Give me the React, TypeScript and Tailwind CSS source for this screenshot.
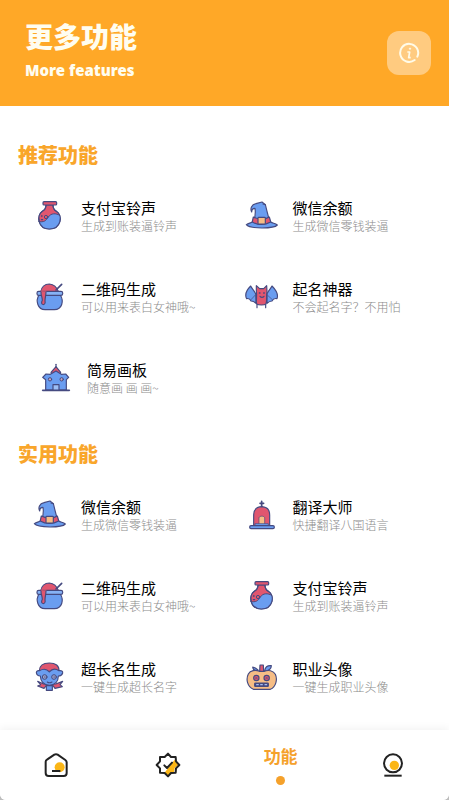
import type { ReactNode } from "react";

const OUT = "#454a80";
const BLUE = "#6a9df0";
const PINK = "#e0566f";
const PEACH = "#f6bd85";

function Art({ children }: { children: ReactNode }) {
  return (
    <svg
      viewBox="0 0 108 108"
      className="size-9 shrink-0"
      fill="none"
      stroke={OUT}
      strokeWidth="3.5"
      strokeLinecap="round"
      strokeLinejoin="round"
      aria-hidden="true"
    >
      {children}
    </svg>
  );
}

const Flask = () => (
  <Art>
    <path d="M45 21 C45 31 41 36 34 40 C16 52 20 92 55 93 C91 92 96 52 76 40 C69 36 66 31 66 21 Z" fill={PINK} />
    <path d="M25 71 C39 75 46 68 52 58 C60 44 75 45 86 53 C93 73 80 92 55 93 C39 93 27 84 25 71 Z" fill={BLUE} stroke="none" />
    <path d="M23 70 C38 75 46 67 52 57 C60 45 75 45 86 52" strokeWidth="3" />
    <path d="M45 21 C45 31 41 36 34 40 C16 52 20 92 55 93 C91 92 96 52 76 40 C69 36 66 31 66 21" />
    <rect x="36" y="11" width="41" height="10" rx="3" fill={PINK} />
    <circle cx="45" cy="57" r="5" strokeWidth="3" />
    <circle cx="32" cy="54" r="2" fill={OUT} strokeWidth="1" />
    <path d="M31 65h4" />
  </Art>
);

const Hat = () => (
  <Art>
    <path d="M33 66 C38 50 38 42 36 31 C29 31 26 35 26 42 C21 32 25 20 39 17 L57 12 L67 20 C72 37 73 52 81 69 Z" fill={BLUE} />
    <path d="M31 57 C44 64 68 65 79 57 L84 75 C66 85 42 84 27 75 Z" fill={PINK} />
    <path d="M10 80 C17 76 23 75 28 72 C44 82 66 82 83 72 C89 76 96 76 103 81 C92 93 20 93 10 80 Z" fill={BLUE} />
    <rect x="45" y="58" width="22" height="20" rx="2" fill={PEACH} />
    <path d="M67 20l-7-2" />
  </Art>
);

const Pot = () => (
  <Art>
    <path d="M29 39 C31 25 41 15 55 15 C70 16 78 26 83 39 Z" fill={PINK} />
    <path d="M75 33 92 16" strokeWidth="5" />
    <path d="M24 48 C13 65 20 92 42 92 H70 C94 91 99 66 88 48 Z" fill={BLUE} />
    <rect x="18" y="37" width="77" height="12" rx="5" fill="#86b2f5" />
    <path d="M30 37 C29 48 34 53 34 64 C25 80 46 81 42 66 C42 55 45 49 45 38" fill={PINK} />
    <path d="M31 36h14" stroke={PINK} />
  </Art>
);

const Bat = () => (
  <Art>
    <path d="M38 44 C33 34 26 28 23 21 C11 33 5 48 11 59 C18 57 21 60 24 66 C30 66 34 68 39 73 Z" fill={BLUE} />
    <path d="M72 44 C77 34 84 28 87 21 C99 33 106 48 102 59 C94 57 90 60 87 66 C80 66 77 68 72 73 Z" fill={BLUE} />
    <path d="M36 49 24 62M74 49 88 62" strokeWidth="2" />
    <path d="M40 37 40 20 50 29 H62 L71 20 72 37 C69 49 73 65 69 75 C64 79 47 79 41 75 C38 64 43 50 40 37 Z" fill={PINK} />
    <path d="M42 77v9M68 77v9M51 52c3 4 9 4 12 0" />
    <path d="M49 42h2M62 42h2" strokeWidth="4" />
  </Art>
);

const Manor = () => (
  <Art>
    <path d="M42 37 L57 20 L71 37 L67 49 H47 Z" fill={PINK} />
    <path d="M57 13v8" />
    <path d="M17 52 27 42 40 43 57 33 73 43 86 42 95 52 88 59 V90 H26 V59 Z" fill={BLUE} />
    <circle cx="39" cy="58" r="5" fill="#c7a6bd" strokeWidth="3" />
    <circle cx="74" cy="58" r="5" fill="#c7a6bd" strokeWidth="3" />
    <path d="M48 91 V74 H66 V91" fill="#9dbff5" />
    <path d="M17 91h80" strokeWidth="5" />
  </Art>
);

const Tomb = () => (
  <Art>
    <path d="M56 13v17M51 19h11" strokeWidth="5" />
    <path d="M32 87 V53 C33 37 43 29 57 29 C71 30 80 38 80 54 V87 Z" fill={PINK} />
    <path d="M48 82 V62 C50 56 63 56 65 62 V82 Z" fill={PEACH} strokeWidth="2" />
    <path d="M37 80h39v6H37Z" fill={BLUE} strokeWidth="2" />
    <rect x="20" y="86" width="74" height="9" rx="4" fill={BLUE} />
  </Art>
);

const Vampire = () => (
  <Art>
    <path d="M20 67 38 75 H74 L95 67 87 77 94 83 72 88 66 80 H46 L39 88 20 81 29 77 Z" fill={PINK} />
    <path d="M46 80 H64 V94 H46 Z" fill={BLUE} />
    <path d="M25 36 C25 19 36 12 55 12 C74 12 85 20 84 37 Z" fill={PINK} />
    <path d="M25 35 C38 28 48 30 55 39 C63 29 73 28 84 35 C91 34 96 36 95 42 C93 49 87 51 82 51 C82 67 72 78 55 79 C38 78 29 67 28 51 C21 51 17 47 16 41 C16 36 20 34 25 35 Z" fill={BLUE} />
    <circle cx="41" cy="54" r="7" fill="#9aa3cc" strokeWidth="3" />
    <circle cx="69" cy="54" r="7" fill="#9aa3cc" strokeWidth="3" />
    <path d="M41 54h1M69 54h1M49 69c4 3 9 3 14 0" />
  </Art>
);

const Pumpkin = () => (
  <Art>
    <path d="M45 33 C40 29 34 25 29 24 C30 33 36 36 45 36 Z" fill={BLUE} />
    <path d="M65 34 C67 24 75 19 85 20 C85 29 79 34 65 36 Z" fill={BLUE} />
    <path d="M49 37 C37 32 22 34 16 45 C8 61 13 83 31 91 H82 C99 84 104 61 97 46 C91 34 76 32 63 37 Z" fill={PEACH} />
    <path d="M51 18h10l1 19H50Z" fill={PINK} />
    <circle cx="40" cy="57" r="8" fill={PINK} />
    <circle cx="71" cy="57" r="8" fill={PINK} />
    <path d="M38 57h4M69 57h4" />
    <rect x="35" y="72" width="41" height="10" rx="2" fill={OUT} />
    <path d="M41 77h5M53 77h5M66 77h5" stroke="#a9bdf0" />
  </Art>
);

type Feature = { title: string; desc: string; icon: ReactNode; inset?: boolean };

const recommended: Feature[] = [
  { title: "支付宝铃声", desc: "生成到账装逼铃声", icon: <Flask /> },
  { title: "微信余额", desc: "生成微信零钱装逼", icon: <Hat /> },
  { title: "二维码生成", desc: "可以用来表白女神哦~", icon: <Pot /> },
  { title: "起名神器", desc: "不会起名字？不用怕", icon: <Bat /> },
  { title: "简易画板", desc: "随意画 画 画~", icon: <Manor />, inset: true },
];

const practical: Feature[] = [
  { title: "微信余额", desc: "生成微信零钱装逼", icon: <Hat /> },
  { title: "翻译大师", desc: "快捷翻译八国语言", icon: <Tomb /> },
  { title: "二维码生成", desc: "可以用来表白女神哦~", icon: <Pot /> },
  { title: "支付宝铃声", desc: "生成到账装逼铃声", icon: <Flask /> },
  { title: "超长名生成", desc: "一键生成超长名字", icon: <Vampire /> },
  { title: "职业头像", desc: "一键生成职业头像", icon: <Pumpkin /> },
];

function Section({ title, items }: { title: string; items: Feature[] }) {
  return (
    <section>
      <h2 className="pl-[18px] text-[20px] leading-7 font-black text-[#f9a62b]">{title}</h2>
      <div className="mx-[13px] mt-1.5 grid grid-cols-2">
        {items.map((f) => (
          <button
            key={f.title}
            type="button"
            className={
              f.inset
                ? "flex h-[81px] items-center gap-3.5 pl-6 text-left"
                : "flex h-[81px] items-center gap-3.5 pl-[18px] text-left"
            }
          >
            {f.icon}
            <span className="flex flex-col whitespace-nowrap">
              <span className="text-[15px] leading-5 text-black">{f.title}</span>
              <span className="text-xs leading-4 font-light text-[#8c8c8c]">{f.desc}</span>
            </span>
          </button>
        ))}
      </div>
    </section>
  );
}

function NavIcon({ children }: { children: ReactNode }) {
  return (
    <svg
      viewBox="0 0 84 84"
      className="size-7"
      fill="none"
      stroke="#222"
      strokeWidth="6"
      strokeLinecap="round"
      strokeLinejoin="round"
      aria-hidden="true"
    >
      {children}
    </svg>
  );
}

export default function App() {
  return (
    <div className="min-h-screen bg-[#bdbdbd] font-['Noto_Sans_CJK_SC','Noto_Sans',sans-serif]">
      <div className="flex min-h-screen flex-col overflow-hidden rounded-b-md bg-white">
        <header className="flex h-[106px] items-center justify-between bg-[#ffa827] pr-[18px] pl-[25px]">
          <div className="pb-1.5 text-[#fffdf0]">
            <h1 className="text-[28px] leading-10 font-black">更多功能</h1>
            <p className="font-['Noto_Sans',sans-serif] text-[15px] leading-7 font-black">More features</p>
          </div>
          <button
            type="button"
            aria-label="关于"
            className="flex size-11 items-center justify-center rounded-xl bg-[#ffcb80]"
          >
            <svg viewBox="0 0 66 66" className="size-[22px]" fill="none" stroke="#fffbe8" strokeWidth="6" aria-hidden="true">
              <path d="M50 54 A27 27 0 1 1 58 44" strokeLinecap="round" />
              <path d="M28 30h7l-3 17h6" strokeLinejoin="round" strokeWidth="5" />
              <circle cx="36" cy="20" r="2" fill="#fffbe8" strokeWidth="3" />
            </svg>
          </button>
        </header>

        <main className="flex flex-1 flex-col gap-[22px] pt-[35px] pb-3">
          <Section title="推荐功能" items={recommended} />
          <Section title="实用功能" items={practical} />
        </main>

        <nav className="grid h-[70px] grid-cols-4 bg-white shadow-[0_-2px_8px_rgba(0,0,0,0.05)]">
          <button type="button" aria-label="首页" className="flex items-center justify-center">
            <NavIcon>
              <circle cx="53" cy="49" r="15" fill="#fbb616" stroke="none" />
              <path d="M11 32 Q11 28 15 26 L37 11 Q42 8 47 11 L70 27 Q74 30 74 34 V66 Q74 75 65 75 H20 Q11 75 11 66 Z" />
              <path d="M30 60h25" strokeLinecap="butt" />
            </NavIcon>
          </button>
          <button type="button" aria-label="任务" className="flex items-center justify-center">
            <NavIcon>
              <path d="M62 26 73 42 62 51 60 64 42 75 31 66 Z" fill="#fbb616" stroke="none" />
              <path d="M42 8 51 18 65 18 66 31 76 42 66 52 65 65 51 66 42 76 32 66 18 65 18 52 8 42 18 31 18 18 32 18 Z" />
              <path d="M31 43 39 51 54 35" />
            </NavIcon>
          </button>
          <button type="button" aria-current="page" className="flex flex-col items-center gap-2 pt-3.5">
            <span className="text-[17px] leading-6 font-bold text-[#f5a12b]">功能</span>
            <span className="size-[9px] rounded-full bg-[#f5a12b]" />
          </button>
          <button type="button" aria-label="我的" className="flex items-center justify-center">
            <NavIcon>
              <circle cx="46" cy="43" r="14" fill="#fbb616" stroke="none" />
              <circle cx="42" cy="37" r="27" />
              <path d="M16 74h52" strokeLinecap="butt" />
            </NavIcon>
          </button>
        </nav>
      </div>
    </div>
  );
}
